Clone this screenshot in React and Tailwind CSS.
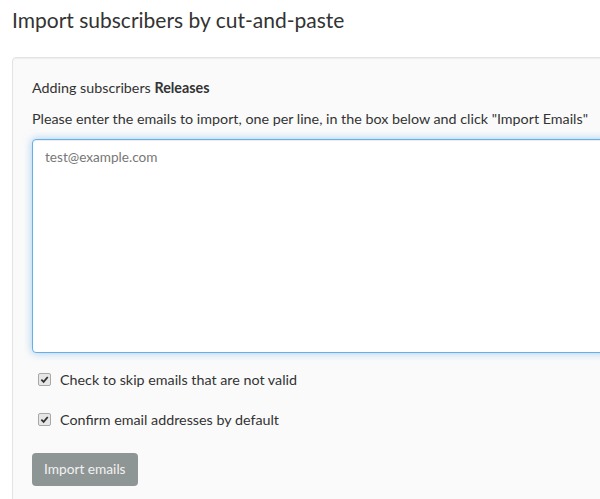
export default function App() {
  const check = (
    <span className="flex h-[13px] w-[13px] items-center justify-center rounded-[2px] border border-[#a8a8a8] bg-[#e6e6e6]">
      <svg width="9" height="9" viewBox="0 0 10 10">
        <path d="M1.5 5.2 L4 7.6 L8.6 2.2" fill="none" stroke="#333" strokeWidth="2" />
      </svg>
    </span>
  );

  return (
    <div className="h-[499px] w-[600px] overflow-hidden bg-white font-['Lato','Noto_Sans',sans-serif] text-[#333]">
      <h1 className="ml-3 mt-[5px] text-[21px] leading-[30px] text-[#333]">
        Import subscribers by cut-and-paste
      </h1>
      <div className="ml-3 mt-[22px] w-[660px] rounded-[4px] border border-[#e3e3e3] bg-[#fafafa] pl-[19px] pr-5 pt-[19px] pb-5 shadow-[inset_0_1px_1px_rgba(0,0,0,0.05)]">
        <p className="text-[14.3px] leading-[21px]">
          Adding subscribers <b>Releases</b>
        </p>
        <p className="mt-[10px] whitespace-nowrap text-[14.3px] leading-[21px]">
          Please enter the emails to import, one per line, in the box below and click "Import Emails"
        </p>
        <textarea
          className="mt-[10px] block h-[214px] w-[620px] resize-none rounded-[4px] border border-[#66afe9] bg-white px-3 py-[7px] text-[13.6px] leading-[20px] text-[#555] shadow-[inset_0_1px_1px_rgba(0,0,0,0.075),0_0_8px_rgba(102,175,233,0.6)] outline-none placeholder:text-[#777]"
          placeholder="test@example.com"
        />
        <label className="mt-[16px] flex items-center gap-[9px] pl-[6px] text-[14.3px] leading-[21px]">
          {check}
          Check to skip emails that are not valid
        </label>
        <label className="mt-[19px] flex items-center gap-[9px] pl-[6px] text-[14.3px] leading-[21px]">
          {check}
          Confirm email addresses by default
        </label>
        <button className="mt-[23px] h-[33px] rounded-[4px] bg-[#8e9595] px-3 text-[13.7px] text-[#f2f2f2]">
          Import emails
        </button>
      </div>
    </div>
  );
}
